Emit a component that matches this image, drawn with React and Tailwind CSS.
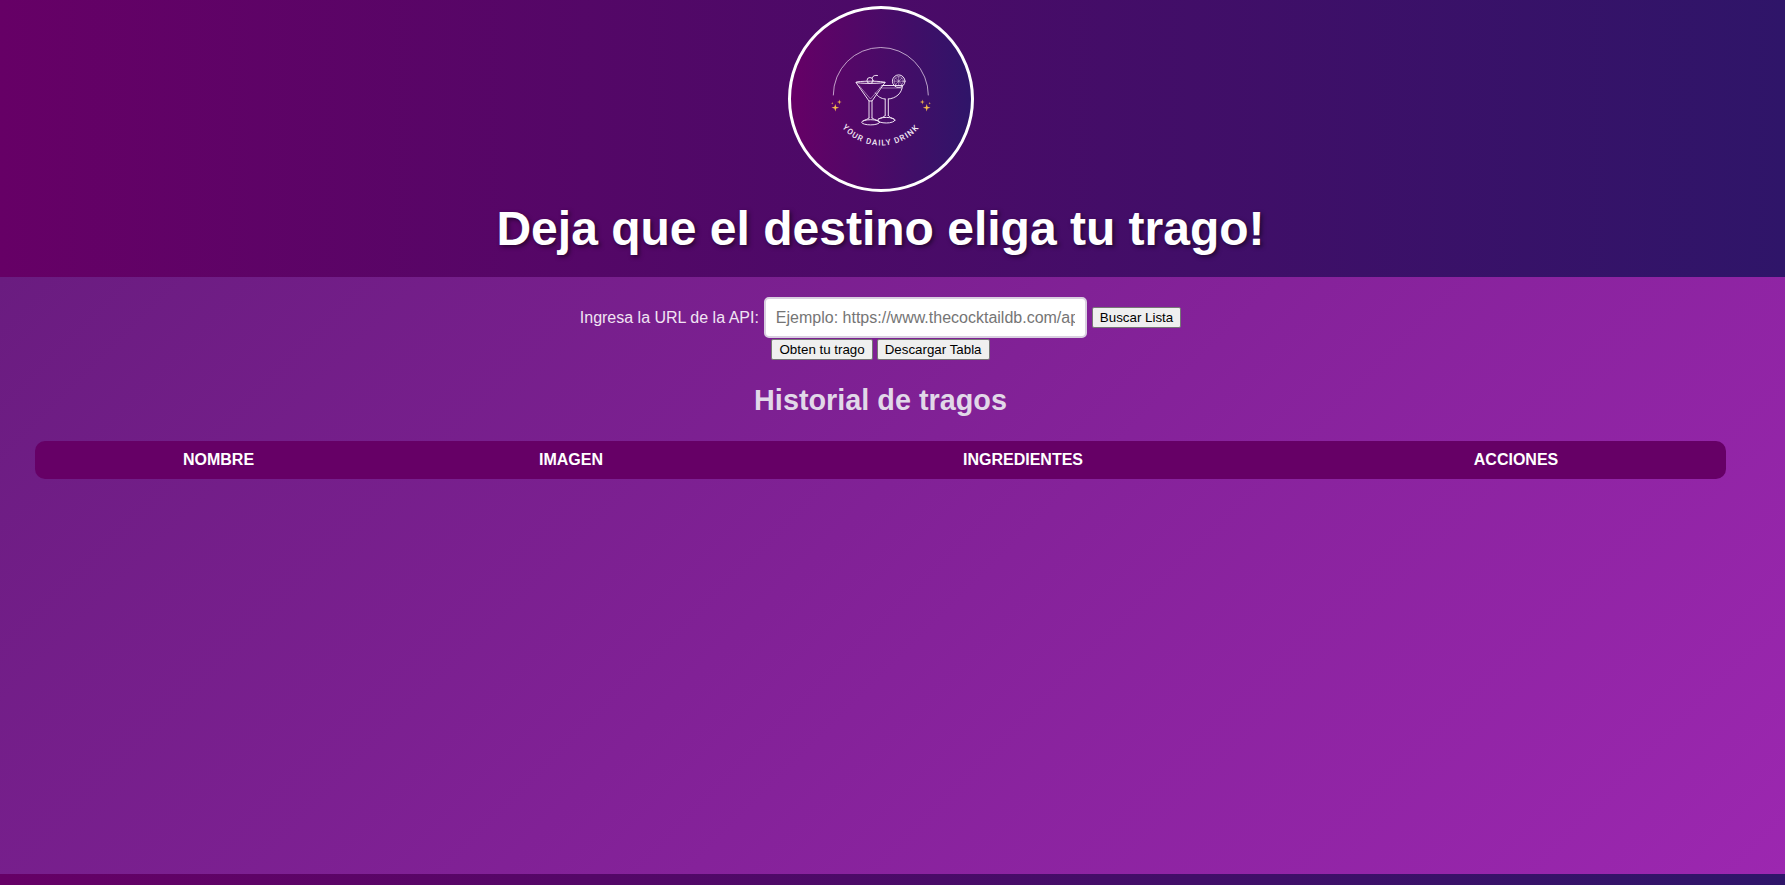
import React from 'react';

function Sparkle({ x, y, r, color = '#f7bd4a' }) {
    const s = r * 0.22;
    return (
        <path
            d={`M${x} ${y - r}L${x + s} ${y - s}L${x + r} ${y}L${x + s} ${y + s}L${x} ${y + r}L${x - s} ${y + s}L${x - r} ${y}L${x - s} ${y - s}Z`}
            fill={color}
        />
    );
}

function Logo() {
    return (
        <div className="h-[186px] w-[186px] rounded-full border-[3px] border-white bg-[linear-gradient(90deg,#660066,#2f1569)] overflow-hidden flex-shrink-0">
            <svg viewBox="3 3 180 180" className="w-[180px] h-[180px]" fill="none" stroke="#f0e2f3" strokeWidth="1" strokeLinecap="round" strokeLinejoin="round">
                <path d="M45.3 89A47.5 47.5 0 0 1 140.3 89" strokeWidth="0.7" />

                <g transform="translate(0 1.5)">
                    {/* martini */}
                    <ellipse cx="82.5" cy="74.8" rx="14.5" ry="1.1" />
                    <path d="M68 75L81 93.5H84L97 75" />
                    <path d="M71 78L82.5 91.5L94 78" strokeWidth="0.5" />
                    <path d="M81 93.5V110.5M84 93.5V110.5" />
                    <ellipse cx="82.7" cy="114.8" rx="9" ry="2.6" />
                    <path d="M75 113.5C78 112 80 111.5 81 110.5M90.5 113.5C87 112 85 111.5 84 110.5" />
                    <circle cx="82" cy="73" r="3" />
                    <path d="M84 70.5C85 68 87 67.6 89.5 68" />

                    {/* coupe */}
                    <path d="M94 78H114.5" />
                    <path d="M94 80.5H114" strokeWidth="0.5" />
                    <path d="M114.4 78C114.3 86 107.5 91 100.5 91.5M87.5 85.5C90 89.5 93 91 97 91.5" />
                    <path d="M97.2 91.5V108M100.3 91.5V108" />
                    <ellipse cx="98.3" cy="112.7" rx="8.6" ry="2.8" />
                    <path d="M90.5 111.5C93.5 110.5 96 109.5 97.2 108M106 111.5C103 110.5 101.3 109.5 100.3 108" />

                    {/* lemon wheel */}
                    <circle cx="110.7" cy="73.7" r="6.3" />
                    <circle cx="110.7" cy="73.7" r="4.6" strokeWidth="0.5" />
                    <path d="M106.2 73.7H115.2M110.7 69.2V78.2M107.5 70.5L113.9 76.9M113.9 70.5L107.5 76.9" strokeWidth="0.5" />
                </g>

                <g stroke="none">
                    <Sparkle x={47.3} y={101.7} r={3.8} />
                    <Sparkle x={51.3} y={96} r={2.4} />
                    <Sparkle x={44.3} y={97.3} r={1.3} />
                    <Sparkle x={138.7} y={101.7} r={3.8} />
                    <Sparkle x={134.3} y={96} r={2.4} />
                    <Sparkle x={141.7} y={97.3} r={1.3} />
                </g>

                <path id="logoCurve" d="M42.3 89A50.5 50.5 0 0 0 143.3 89" stroke="none" />
                <text fill="#f4e9f6" stroke="none" className="font-['Roboto',sans-serif]" fontSize="8" fontWeight="500" letterSpacing="1.2">
                    <textPath href="#logoCurve" startOffset="50%" textAnchor="middle">YOUR DAILY DRINK</textPath>
                </text>
            </svg>
        </div>
    );
}

export default function App() {
    return (
        <div className="min-h-screen flex flex-col font-['Liberation_Sans',Arial,sans-serif] text-white">
            <header className="h-[277px] bg-[linear-gradient(90deg,#660066,#2f1569)] pt-[6px] pr-6 flex flex-col items-center">
                <Logo />
                <h1 className="mt-[9px] text-[48px] leading-[55px] font-bold [text-shadow:2px_2px_4px_rgba(0,0,0,0.5)]">
                    Deja que el destino eliga tu trago!
                </h1>
            </header>

            <main className="flex-1 bg-[linear-gradient(135deg,#6a1c80,#9c27b0)] pt-5 pr-[59px] pl-[35px]">
                <div className="flex items-center justify-center">
                    <label className="text-base text-[#f1e4f3] mr-[5px]">Ingresa la URL de la API:</label>
                    <input
                        type="text"
                        placeholder="Ejemplo: https://www.thecocktaildb.com/api/json/v1/1/search.php"
                        className="w-[323px] h-[41px] px-[10px] text-base bg-white text-black rounded-[5px] border-2 border-[#d9cfe0] placeholder:text-[#757575] outline-none"
                    />
                    <button className="ml-[5px] h-[21px] px-[7px] text-[13.33px] leading-none text-black bg-[#efefef] border border-[#767676] rounded-[2px]">
                        Buscar Lista
                    </button>
                </div>
                <div className="flex justify-center gap-[4px] mt-[1px]">
                    <button className="h-[21px] px-[7px] text-[13.33px] leading-none text-black bg-[#efefef] border border-[#767676] rounded-[2px]">
                        Obten tu trago
                    </button>
                    <button className="h-[21px] px-[7px] text-[13.33px] leading-none text-black bg-[#efefef] border border-[#767676] rounded-[2px]">
                        Descargar Tabla
                    </button>
                </div>

                <h2 className="mt-[24px] text-center text-[28.8px] leading-[33px] font-bold text-[#e1d8e8]">Historial de tragos</h2>

                <table className="mt-[24px] w-full table-fixed border-separate border-spacing-0 rounded-[10px] overflow-hidden bg-[#660066]">
                    <thead>
                        <tr className="h-[38px] text-base font-bold uppercase text-center">
                            <th className="w-[367px]">Nombre</th>
                            <th className="w-[338px]">Imagen</th>
                            <th className="w-[566px]">Ingredientes</th>
                            <th>Acciones</th>
                        </tr>
                    </thead>
                </table>
            </main>

            <footer className="h-[11px] bg-[linear-gradient(90deg,#660066,#2f1569)]" />
        </div>
    );
}
